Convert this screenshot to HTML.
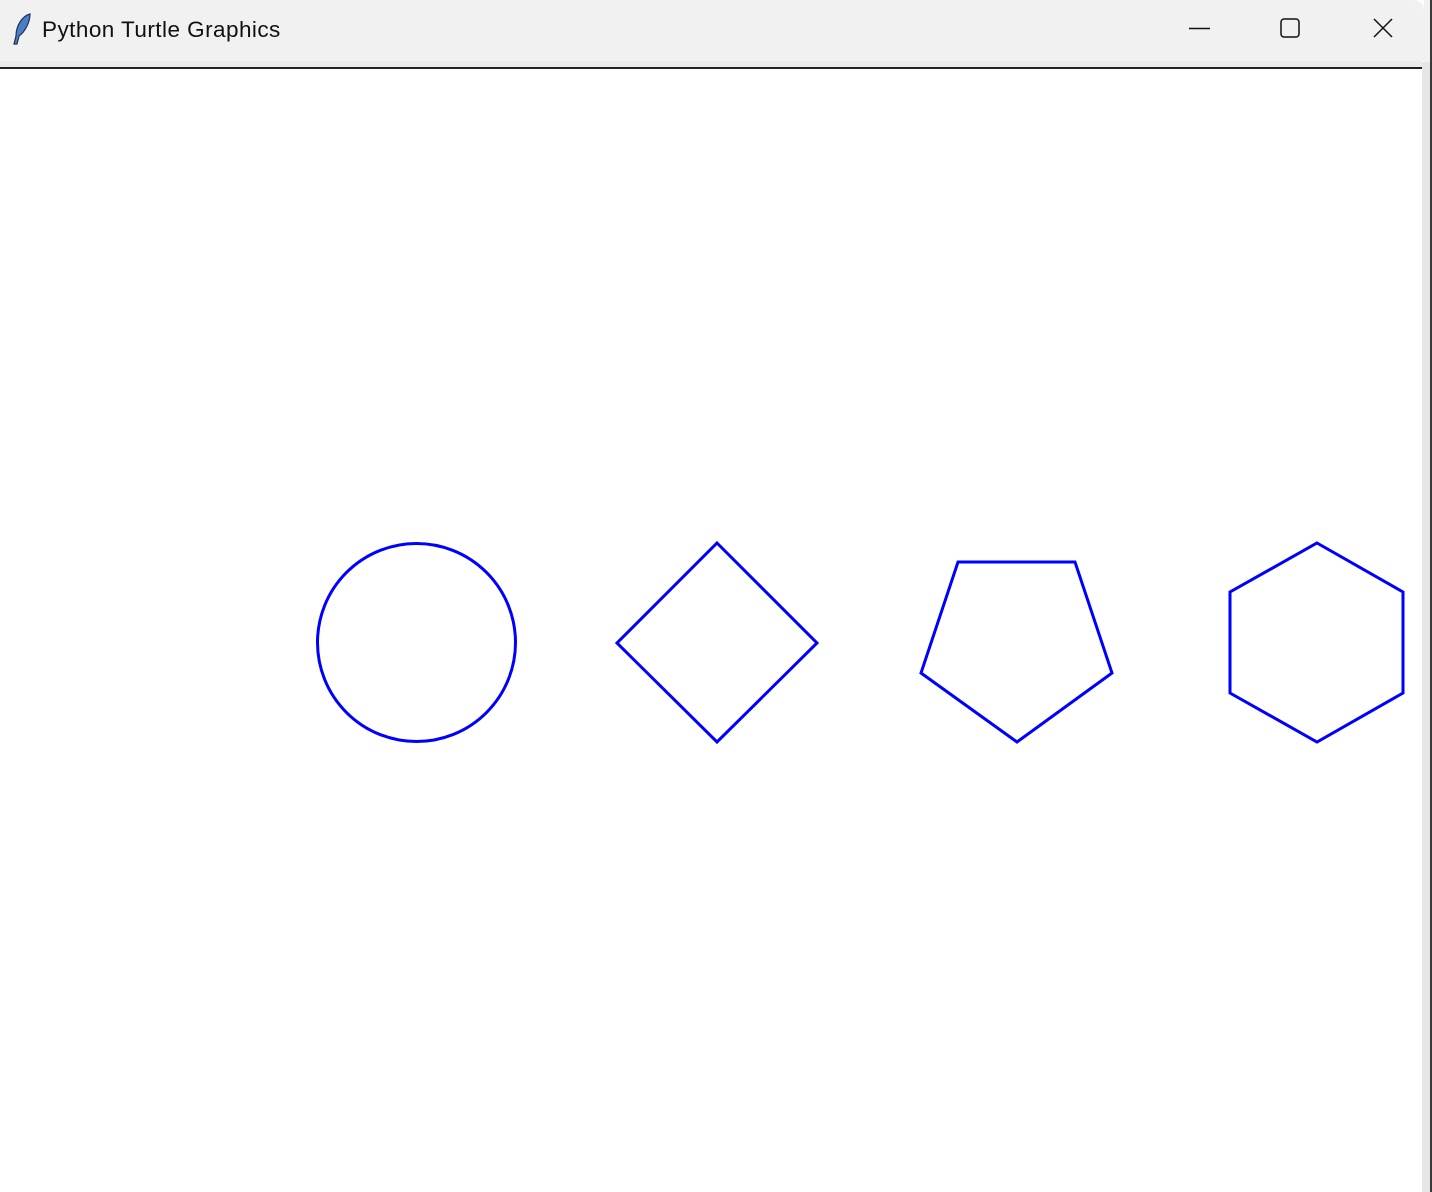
<!DOCTYPE html>
<html><head><meta charset="utf-8"><style>
html,body{margin:0;padding:0;width:1432px;height:1192px;overflow:hidden;background:#fff;position:relative}
.tb{position:absolute;left:0;top:0;width:1424px;height:61px;background:#f2f1f2;border-top-right-radius:10px}
.strip{position:absolute;left:0;top:61px;width:1422px;height:6px;background:#ebebeb}
.line{position:absolute;left:0;top:67px;width:1422px;height:2px;background:#222}
.title{position:absolute;left:42px;top:17px;font:22.5px "Liberation Sans",sans-serif;letter-spacing:0.45px;color:#111}
.rg{position:absolute;left:1422px;top:62px;width:8px;height:1130px;background:#e6e6e6}
.rd{position:absolute;left:1430px;top:0;width:2px;height:1192px;background:#3a3a3a}
.corner{position:absolute;left:1424px;top:0;width:8px;height:62px;background:#f2f1f2}
</style></head><body>
<div class="tb"></div>
<div class="corner"></div>
<div class="strip"></div>
<div class="line"></div>
<div class="rg"></div>
<div class="rd"></div>
<svg style="position:absolute;left:10px;top:12px" width="24" height="34" viewBox="0 0 24 34">
<path d="M20 2 C12 4 6 14 6 24 L4 32 L7 32 L9 24 C15 20 20 10 20 2Z" fill="#4a7fc8" stroke="#1f3350" stroke-width="1.2"/>
</svg>
<div class="title">Python Turtle Graphics</div>
<svg style="position:absolute;left:0;top:0" width="1432" height="60">
<line x1="1189" y1="28.5" x2="1210" y2="28.5" stroke="#111" stroke-width="1.5"/>
<rect x="1281" y="19" width="18" height="18" rx="3" fill="none" stroke="#111" stroke-width="1.5"/>
<path d="M1374 19 L1392 37 M1392 19 L1374 37" stroke="#111" stroke-width="1.5"/>
</svg>
<svg style="position:absolute;left:0;top:0" width="1432" height="1192">
<g fill="none" stroke="#0000ff" stroke-width="3" stroke-linejoin="miter">
<circle cx="416.5" cy="642.5" r="99"/>
<polygon points="717,543 817,643 717,742 617,643"/>
<polygon points="958,562 1075,562 1112,673 1017,742 921,673"/>
<polygon points="1317,543 1403,592 1403,693 1317,742 1230,693 1230,592"/>
</g>
</svg>
</body></html>
